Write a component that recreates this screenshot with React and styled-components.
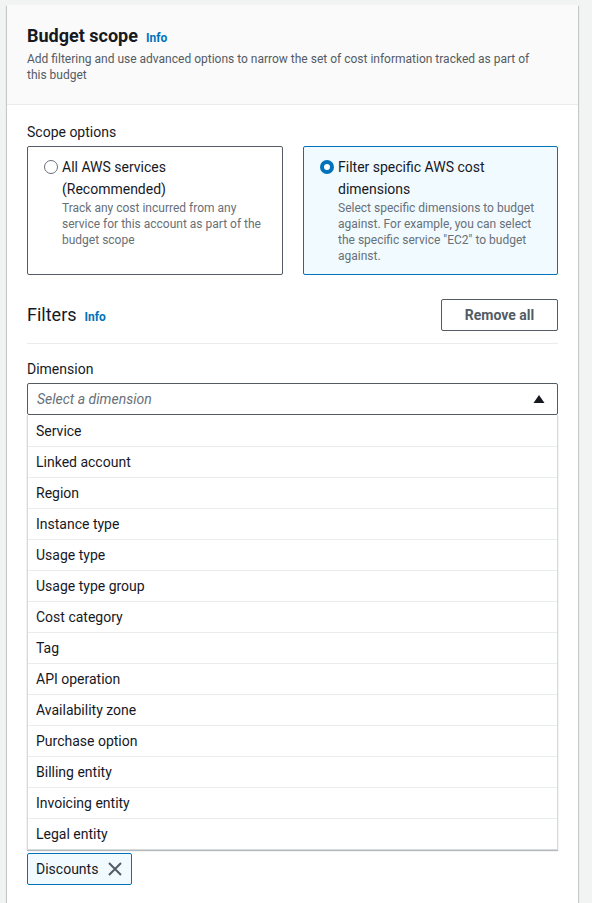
import React from 'react'
import styled, { createGlobalStyle } from 'styled-components'

const GlobalStyle = createGlobalStyle`
  body {
    margin: 0;
    background: #f2f3f3;
    font-family: Roboto, "Liberation Sans", Arial, sans-serif;
    color: #16191f;
  }
`

const dimensions = [
  'Service',
  'Linked account',
  'Region',
  'Instance type',
  'Usage type',
  'Usage type group',
  'Cost category',
  'Tag',
  'API operation',
  'Availability zone',
  'Purchase option',
  'Billing entity',
  'Invoicing entity',
  'Legal entity',
]

const App = () => (
  <Page>
    <GlobalStyle />
    <Container>
      <Header>
        <TitleRow>
          <Title>Budget scope</Title>
          <InfoLink>Info</InfoLink>
        </TitleRow>
        <Description>
          Add filtering and use advanced options to narrow the set of cost information tracked as part of
          this budget
        </Description>
      </Header>
      <Body>
        <Label>Scope options</Label>
        <Tiles>
          <Tile>
            <Radio />
            <TileText>
              <TileTitle>All AWS services (Recommended)</TileTitle>
              <TileDesc>Track any cost incurred from any service for this account as part of the budget scope</TileDesc>
            </TileText>
          </Tile>
          <Tile selected>
            <Radio selected />
            <TileText>
              <TileTitle>Filter specific AWS cost dimensions</TileTitle>
              <TileDesc>
                Select specific dimensions to budget against. For example, you can select the specific service "EC2" to budget
                against.
              </TileDesc>
            </TileText>
          </Tile>
        </Tiles>

        <FiltersHeader>
          <TitleRow>
            <SubTitle>Filters</SubTitle>
            <InfoLink>Info</InfoLink>
          </TitleRow>
          <Button>Remove all</Button>
        </FiltersHeader>

        <Label>Dimension</Label>
        <Select>
          <Placeholder>Select a dimension</Placeholder>
          <svg width="12" height="10" viewBox="0 0 12 10">
            <path d="M6 1 L11.5 9 L0.5 9 Z" fill="#16191f" />
          </svg>
        </Select>
        <Menu>
          {dimensions.map(d => (
            <MenuItem key={d}>{d}</MenuItem>
          ))}
        </Menu>
        <Token>
          Discounts
          <svg width="16" height="16" viewBox="0 0 16 16">
            <path d="M2 2 L14 14 M14 2 L2 14" stroke="#545b64" strokeWidth="2" fill="none" />
          </svg>
        </Token>
      </Body>
    </Container>
  </Page>
)

export default App

const Page = styled.div`
  padding: 5px 14px 0 7px;
`

const Container = styled.div`
  background: #fff;
  box-shadow: 0 1px 1px 0 rgba(0, 28, 36, 0.3), 1px 1px 1px 0 rgba(0, 28, 36, 0.15),
    -1px 1px 1px 0 rgba(0, 28, 36, 0.15);
  min-height: 898px;
`

const Header = styled.div`
  background: #fafafa;
  border-bottom: 1px solid #eaeded;
  padding: 19px 20px 21px;
`

const TitleRow = styled.div`
  display: flex;
  align-items: baseline;
  gap: 8px;
`

const Title = styled.h2`
  margin: 0;
  font-size: 18px;
  font-weight: 700;
  line-height: 24px;
`

const SubTitle = styled.h3`
  margin: 0;
  font-size: 18px;
  font-weight: 400;
  line-height: 24px;
`

const InfoLink = styled.span`
  font-size: 12px;
  font-weight: 700;
  color: #0073bb;
`

const Description = styled.p`
  margin: 3px 0 0;
  max-width: 520px;
  font-size: 12px;
  line-height: 16px;
  color: #545b64;
`

const Body = styled.div`
  padding: 16px 20px 0;
`

const Label = styled.div`
  font-size: 14px;
  line-height: 22px;
  margin-bottom: 3px;
`

const Tiles = styled.div`
  display: grid;
  grid-template-columns: 256px 1fr;
  gap: 20px;
`

const Tile = styled.div`
  display: flex;
  gap: 4px;
  height: 129px;
  box-sizing: border-box;
  padding: 9px 16px;
  border: 1px solid ${p => (p.selected ? '#0073bb' : '#545b64')};
  background: ${p => (p.selected ? '#f1faff' : '#fff')};
  border-radius: 2px;
`

const Radio = styled.span`
  flex: none;
  width: 14px;
  height: 14px;
  margin-top: 4px;
  box-sizing: border-box;
  border-radius: 50%;
  border: ${p => (p.selected ? '4px solid #0073bb' : '1px solid #687078')};
  background: #fff;
`

const TileText = styled.div`
  display: flex;
  flex-direction: column;
`

const TileTitle = styled.div`
  font-size: 14px;
  line-height: 22px;
`

const TileDesc = styled.div`
  font-size: 12px;
  line-height: 16px;
  color: #687078;
`

const FiltersHeader = styled.div`
  display: flex;
  justify-content: space-between;
  align-items: center;
  margin-top: 24px;
  padding-bottom: 12px;
  border-bottom: 1px solid #eaeded;
  margin-bottom: 14px;
`

const Button = styled.button`
  font-family: inherit;
  font-size: 14px;
  font-weight: 700;
  color: #545b64;
  background: #fff;
  border: 1px solid #545b64;
  border-radius: 2px;
  width: 117px;
  height: 32px;
  padding: 0;
`

const Select = styled.div`
  display: flex;
  justify-content: space-between;
  align-items: center;
  height: 32px;
  box-sizing: border-box;
  padding: 0 12px 0 9px;
  border: 1px solid #545b64;
  border-radius: 2px;
`

const Placeholder = styled.span`
  font-size: 14px;
  font-style: italic;
  color: #687078;
`

const Menu = styled.ul`
  list-style: none;
  margin: 0;
  padding: 0;
  background: #fff;
  border: 1px solid #d5dbdb;
  border-top: none;
  box-shadow: 0 1px 1px 0 rgba(0, 28, 36, 0.3);
`

const MenuItem = styled.li`
  height: 31px;
  box-sizing: border-box;
  padding: 0 8px;
  display: flex;
  align-items: center;
  font-size: 14px;
  border-top: 1px solid #eaeded;
  &:first-child {
    border-top: none;
  }
`

const Token = styled.div`
  display: inline-flex;
  align-items: center;
  gap: 9px;
  margin-top: 3px;
  height: 32px;
  box-sizing: border-box;
  padding: 0 8px;
  font-size: 14px;
  background: #f1faff;
  border: 1px solid #0073bb;
  border-radius: 2px;
`
